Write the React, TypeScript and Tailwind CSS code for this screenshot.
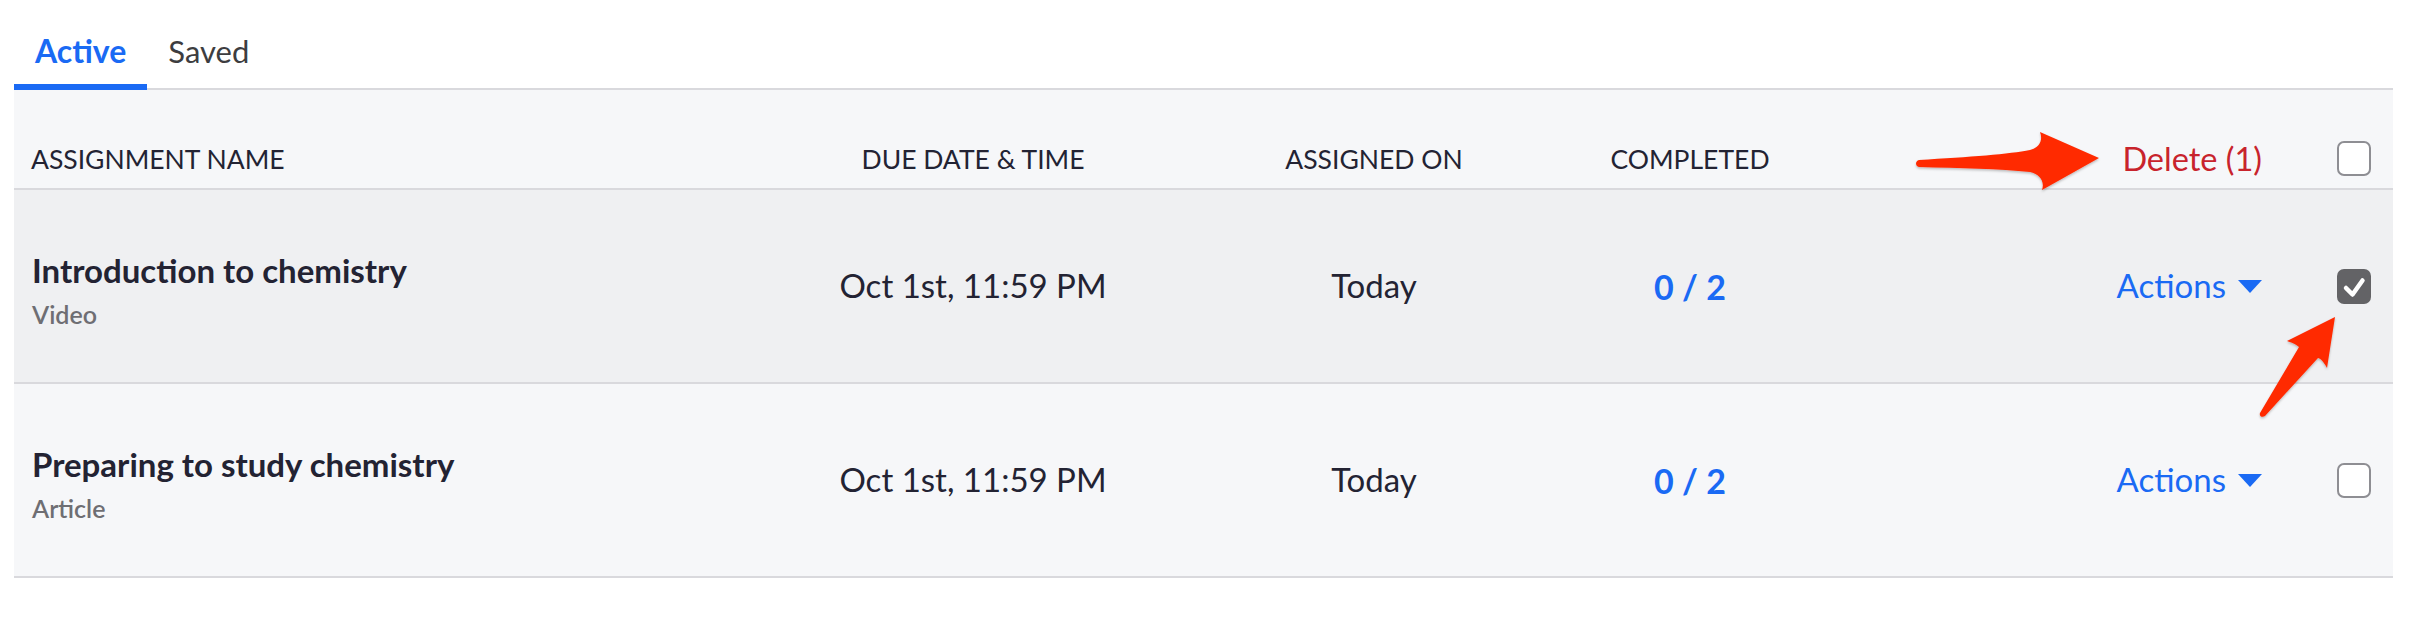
import React from "react";

const rows = [
  { title: "Introduction to chemistry", kind: "Video", checked: true, bg: "bg-[#eff0f2]" },
  { title: "Preparing to study chemistry", kind: "Article", checked: false, bg: "bg-[#f6f7f9]" },
];

function Checkbox({ checked }: { checked: boolean }) {
  if (checked) {
    return (
      <div className="w-[34px] h-[35px] rounded-[7px] bg-[#636366] flex items-center justify-center">
        <svg width="34" height="35" viewBox="0 0 34 35">
          <path d="M9 19 L15.5 25.5 L25.5 11.5" fill="none" stroke="#ffffff" strokeWidth="4.5" strokeLinecap="round" strokeLinejoin="round" />
        </svg>
      </div>
    );
  }
  return <div className="w-[34px] h-[35px] rounded-[7px] border-2 border-[#8e8e93] bg-white" />;
}

function Caret() {
  return (
    <svg width="24" height="13" viewBox="0 0 24 13" className="ml-[12px]">
      <path d="M0 0 H24 L12 13 Z" fill="#1a6af4" />
    </svg>
  );
}

export default function App() {
  return (
    <div className="relative w-[2416px] h-[618px] bg-white font-['Lato',sans-serif] text-[#232333]">
      <div className="w-[2379px] ml-[14px]">
        {/* Tabs */}
        <div className="flex pt-[31px] border-b-2 border-[#d9d9dd]">
          <div className="px-[21px] pb-[13px] border-b-[6px] border-[#1a6af4] -mb-[2px]">
            <span className="block leading-[40px] text-[32px] font-bold text-[#1a6af4]">Active</span>
          </div>
          <div className="px-[21px] pb-[13px]">
            <span className="block leading-[40px] text-[31px] text-[#3d3d40]">Saved</span>
          </div>
        </div>

        {/* Header */}
        <div className="grid grid-cols-[746px_426px_376px_256px_1fr_77px] items-center h-[100px] pt-[39px] bg-[#f6f7f9] border-b-2 border-[#d9d9dd] text-[26.5px] leading-[32px]">
          <div className="pl-[17px]">ASSIGNMENT NAME</div>
          <div className="text-center">DUE DATE &amp; TIME</div>
          <div className="text-center">ASSIGNED ON</div>
          <div className="text-center">COMPLETED</div>
          <div className="text-right pr-[54px] text-[32.5px] text-[#c8232c]">Delete (1)</div>
          <div className="pl-[21px]">
            <Checkbox checked={false} />
          </div>
        </div>

        {/* Rows */}
        {rows.map((r) => (
          <div
            key={r.title}
            className={`grid grid-cols-[746px_426px_376px_256px_1fr_77px] items-center h-[194px] border-b-2 border-[#d9d9dd] ${r.bg}`}
          >
            <div className="pl-[18px] pt-[7px]">
              <div className="text-[33px] leading-[38px] font-bold">{r.title}</div>
              <div className="mt-[10px] text-[25px] leading-[30px] font-semibold text-[#6e6e73]">{r.kind}</div>
            </div>
            <div className="text-center text-[33px]">Oct 1st, 11:59 PM</div>
            <div className="text-center text-[33px]">Today</div>
            <div className="text-center text-[34px] font-bold text-[#1a6af4]">0 / 2</div>
            <div className="flex items-center justify-end pr-[54px]">
              <span className="text-[33px] text-[#1a6af4]">Actions</span>
              <Caret />
            </div>
            <div className="pl-[21px]">
              <Checkbox checked={r.checked} />
            </div>
          </div>
        ))}
      </div>

      {/* annotation arrows */}
      <svg className="absolute left-0 top-0 pointer-events-none" width="2416" height="618" viewBox="0 0 2416 618">
        <defs>
          <filter id="sh" x="-10%" y="-10%" width="120%" height="130%">
            <feDropShadow dx="0" dy="1.5" stdDeviation="1.2" floodColor="#000000" floodOpacity="0.25" />
          </filter>
        </defs>
        <g fill="#ff2a00" filter="url(#sh)">
          <path d="M1919 160 C1970 157 2010 154 2030 150 C2040 147 2043 140 2040 132 L2099 158 L2042 190 C2045 182 2040 174 2030 172 C2000 169 1960 168 1919 167 C1915 166 1915 161 1919 160 Z" />
          <path d="M2335 317 L2327 368 C2324 362 2320 358 2318 358 L2265 416 C2262 418 2259 416 2260 413 L2299 347 C2296 344 2290 342 2287 341 Z" />
        </g>
      </svg>
    </div>
  );
}
